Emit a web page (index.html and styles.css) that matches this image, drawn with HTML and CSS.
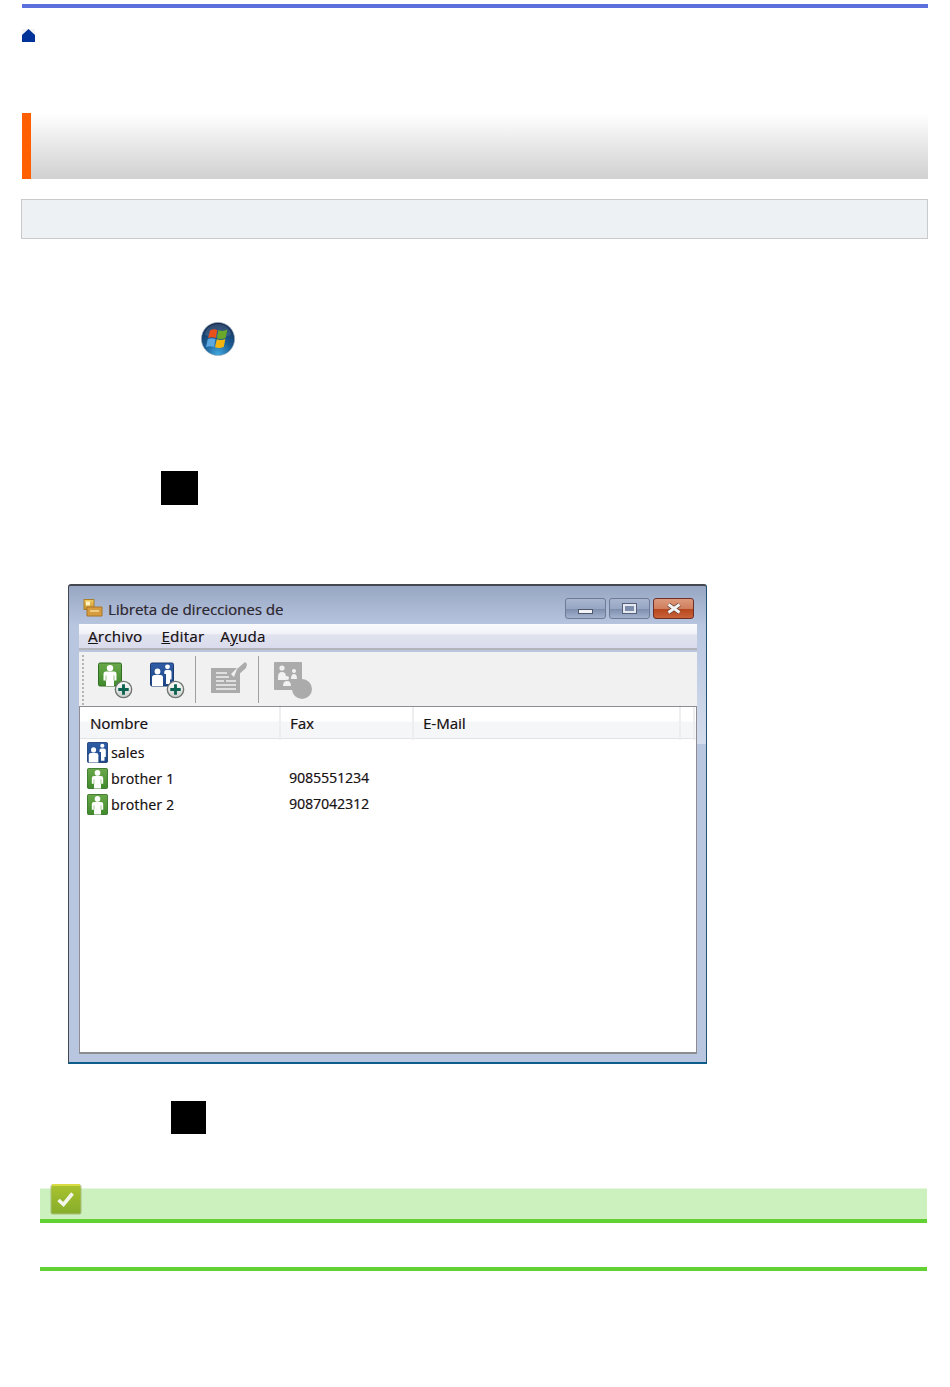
FILE: index.html
```html
<!DOCTYPE html>
<html>
  <head>
    <meta charset="utf-8" />
    <title>Libreta de direcciones</title>
    <link rel="stylesheet" href="styles.css">
  </head>

  <body>
    <!-- shared icons -->
    <svg class="sprite" xmlns="http://www.w3.org/2000/svg">
      <defs>
        <linearGradient id="g-green" x1="0" y1="0" x2="0" y2="1">
          <stop offset="0" stop-color="#6aa84a" />
          <stop offset="1" stop-color="#3f8a2c" />
        </linearGradient>
        <linearGradient id="g-blue" x1="0" y1="0" x2="0" y2="1">
          <stop offset="0" stop-color="#2f5da6" />
          <stop offset="1" stop-color="#1d4585" />
        </linearGradient>
        <linearGradient id="g-badge" x1="0" y1="0" x2="0" y2="1">
          <stop offset="0" stop-color="#ffffff" />
          <stop offset="1" stop-color="#c9cdc9" />
        </linearGradient>
        <radialGradient id="g-orb" cx="0.5" cy="0.95" r="0.95">
          <stop offset="0" stop-color="#3fa6dc" />
          <stop offset="0.45" stop-color="#1c5f97" />
          <stop offset="1" stop-color="#15294f" />
        </radialGradient>
        <linearGradient id="g-check" x1="0" y1="0" x2="0" y2="1">
          <stop offset="0" stop-color="#a8c22e" />
          <stop offset="1" stop-color="#86ad2b" />
        </linearGradient>
        <linearGradient id="g-book" x1="0" y1="0" x2="0" y2="1">
          <stop offset="0" stop-color="#f0cf62" />
          <stop offset="1" stop-color="#c98f2e" />
        </linearGradient>
      </defs>
      <symbol id="i-person" viewBox="0 0 24 24">
        <rect x="0.5" y="0.5" width="23" height="23" rx="1.5" fill="url(#g-green)" stroke="#2f6d20" />
        <circle cx="12" cy="5.6" r="3.2" fill="#fff" />
        <path d="M5.500 11.500q0-2.500 2.500-2.500h8q2.500 0 2.500 2.500v6.500h-2.500v5.500h-8V18H5.500z" fill="#fff" />
        <path d="M8 13v5M16 13v5" stroke="#7fb466" stroke-width="0.8" />
      </symbol>
      <symbol id="i-group" viewBox="0 0 24 24">
        <rect x="0.5" y="0.5" width="23" height="23" rx="1.500" fill="url(#g-blue)" stroke="#173a73" />
        <circle cx="7.500" cy="9" r="2.900" fill="#fff" />
        <path d="M2 15q0-2.500 2.500-2.500h6q2.500 0 2.500 2.500v8.500H2z" fill="#fff" />
        <circle cx="17.500" cy="4.300" r="2.400" fill="#fff" />
        <path d="M14.300 9.500q0-2 2-2h3q2.200 0 2.200 2v7.500h-1.500v4.500h-4v-10h-1.700z" fill="#fff" />
      </symbol>
      <symbol id="i-plus" viewBox="0 0 20 20">
        <circle cx="10" cy="10" r="8.600" fill="url(#g-badge)" stroke="#6d746f" stroke-width="1.400" />
        <path d="M8.500 4.500h3v4h4v3h-4v4h-3v-4h-4v-3h4z" fill="#0c6150" />
      </symbol>
    </svg>

    <div class="top-bar"></div>

    <svg class="home-icon" viewBox="0 0 13 13" xmlns="http://www.w3.org/2000/svg">
      <rect width="13" height="6" fill="#f4f4f4" />
      <path d="M6.500 0L13 6v7H0V6z" fill="#003399" />
    </svg>

    <div class="heading"></div>
    <div class="lead-box"></div>

    <svg class="orb-icon" viewBox="0 0 34 34" xmlns="http://www.w3.org/2000/svg">
      <circle cx="17" cy="17" r="16.600" fill="url(#g-orb)" stroke="#9aa7b5" stroke-width="0.600" />
      <path d="M4 13a13 11 0 0 1 26 0q-13 5-26 0z" fill="#fff" opacity="0.120" />
      <path d="M9 8.500q3.600-2 7.300-.5l-1.500 8q-3.800-1.500-7.700 0z" fill="#e8501c" />
      <path d="M17.500 8q4 2 8.800-.5l-1.700 8.500q-4.400 2-8.700.3z" fill="#6aa82a" />
      <path d="M6.800 17q4-1.500 7.700 0l-1.500 8q-3.800-1.500-8 .3z" fill="#5ba8e0" />
      <path d="M15.800 17.300q4.300 1.700 8.600-.3l-1.700 8q-4.400 2-8.700.3z" fill="#f5b50f" />
    </svg>

    <div class="redacted redacted-first"></div>

    <div class="app-window">
      <div class="title-row">
        <svg class="book-icon" viewBox="0 0 20 18" xmlns="http://www.w3.org/2000/svg">
          <rect x="1" y="0.500" width="10" height="10" fill="url(#g-book)" stroke="#a87f2c" />
          <rect x="3" y="2.500" width="4" height="4" fill="#fff3c4" />
          <path d="M4 8h15v9H4z" fill="#d59b3d" stroke="#a8742a" />
          <path d="M7 12h9" stroke="#f6dd9a" stroke-width="1.500" />
        </svg>
        <span class="title-text">Libreta de direcciones de</span>
        <div class="win-buttons">
          <div class="win-btn win-min"><span class="glyph-min"></span></div>
          <div class="win-btn win-max"><span class="glyph-max"></span></div>
          <div class="win-btn win-close">
            <svg class="glyph-close" viewBox="0 0 16 11" xmlns="http://www.w3.org/2000/svg">
              <path d="M2.500 1.500l11 8m0-8l-11 8" stroke="#5b3a30" stroke-width="4.400" />
              <path d="M2.500 1.500l11 8m0-8l-11 8" stroke="#f3f3f3" stroke-width="2.900" />
            </svg>
          </div>
        </div>
      </div>

      <div class="menu-bar">
        <span class="menu-item menu-file"><u>A</u>rchivo</span>
        <span class="menu-item menu-edit"><u>E</u>ditar</span>
        <span class="menu-item">A<u>y</u>uda</span>
      </div>

      <div class="tool-bar">
        <div class="grip"></div>
        <svg class="tool tool-add-person" viewBox="0 0 36 37" xmlns="http://www.w3.org/2000/svg">
          <use href="#i-person" width="24" height="25" />
          <use href="#i-plus" x="16" y="18" width="19" height="19" />
        </svg>
        <svg class="tool tool-add-group" viewBox="0 0 36 37" xmlns="http://www.w3.org/2000/svg">
          <use href="#i-group" width="24" height="25" />
          <use href="#i-plus" x="16" y="18" width="19" height="19" />
        </svg>
        <div class="tool-sep"></div>
        <svg class="tool tool-edit" viewBox="0 0 36 37" xmlns="http://www.w3.org/2000/svg">
          <path d="M0 6h26l-6 6 3 3 6-6v22H0z" fill="#ababab" />
          <path d="M26 7l8-7 2 2-1 4-9 8-3 1z" fill="#ababab" />
          <path d="M5 11h11M5 15h13M5 19h8M15 19h10M5 23h20M5 27h20" stroke="#f1f1f1" stroke-width="1.300" />
        </svg>
        <div class="tool-sep tool-sep-last"></div>
        <svg class="tool tool-group-off" viewBox="0 0 39 37" xmlns="http://www.w3.org/2000/svg">
          <rect width="28" height="28" rx="1" fill="#ababab" />
          <circle cx="8" cy="6" r="2.600" fill="#f1f1f1" />
          <path d="M4 15q0-5 4-5t4 5v3H4z" fill="#f1f1f1" />
          <circle cx="20" cy="9" r="2" fill="#f1f1f1" />
          <path d="M17 17q0-5 3-5t3 5z" fill="#f1f1f1" />
          <circle cx="13" cy="16" r="2" fill="#f1f1f1" />
          <path d="M9 24q0-5 4-5t4 5z" fill="#f1f1f1" />
          <circle cx="28" cy="27" r="10" fill="#ababab" />
        </svg>
      </div>

      <div class="list-view">
        <div class="list-head">
          <div class="col-head">Nombre</div>
          <div class="col-head">Fax</div>
          <div class="col-head">E-Mail</div>
          <div class="col-head"></div>
        </div>
        <div class="list-rows">
          <div class="list-row">
            <div class="cell-name"><svg class="row-icon"><use href="#i-group" width="21" height="21" /></svg>sales</div>
            <div class="cell-fax"></div>
          </div>
          <div class="list-row">
            <div class="cell-name"><svg class="row-icon"><use href="#i-person" width="21" height="21" /></svg>brother 1</div>
            <div class="cell-fax">9085551234</div>
          </div>
          <div class="list-row">
            <div class="cell-name"><svg class="row-icon"><use href="#i-person" width="21" height="21" /></svg>brother 2</div>
            <div class="cell-fax">9087042312</div>
          </div>
        </div>
      </div>
    </div>

    <div class="redacted redacted-second"></div>

    <div class="note">
      <div class="note-head">
        <svg class="note-icon" viewBox="0 0 32 31" xmlns="http://www.w3.org/2000/svg">
          <rect x="0.500" y="0.500" width="31" height="30" rx="2" fill="#8a9a4a" opacity="0.550" />
          <rect x="1.500" y="1.500" width="29" height="28" rx="1.500" fill="url(#g-check)" />
          <rect x="2" y="0" width="28" height="2" fill="#d9dc45" />
          <path d="M8.500 16l5 4.500 9-11" fill="none" stroke="#f4f6ec" stroke-width="3.600" />
        </svg>
      </div>
      <div class="note-body"></div>
    </div>
  </body>
</html>
```

FILE: styles.css
```css
html,
body {
  margin: 0;
  background: #ffffff;
}

body {
  font-family: "Open Sans", "Noto Sans", sans-serif;
}

.sprite {
  display: block;
  width: 0;
  height: 0;
}

.top-bar {
  height: 4px;
  margin: 4px 22px 0 22px;
  background-color: #5b70dc;
}

.home-icon {
  display: block;
  width: 13px;
  height: 13px;
  margin: 21px 0 0 22px;
}

.heading {
  height: 66px;
  margin: 71px 22px 0 22px;
  border-left: 9px solid #ff5f00;
  background: linear-gradient(#ffffff, #d0d0d0);
}

.lead-box {
  box-sizing: border-box;
  height: 40px;
  margin: 20px 22px 0 21px;
  border: 1px solid #c8cacc;
  background-color: #eef1f4;
}

.orb-icon {
  display: block;
  width: 34px;
  height: 34px;
  margin: 83px 0 0 201px;
}

.redacted {
  background-color: #000000;
}

.redacted-first {
  width: 37px;
  height: 34px;
  margin: 115px 0 0 161px;
}

.redacted-second {
  width: 35px;
  height: 33px;
  margin: 37px 0 0 171px;
}

/* address book window */
.app-window {
  box-sizing: border-box;
  width: 639px;
  height: 480px;
  margin: 79px 0 0 68px;
  padding: 0 9px 8px 10px;
  border-top: 2px solid #44484f;
  border-left: 1px solid #44484f;
  border-right: 1px solid #24506f;
  border-bottom: 2px solid #0c5d8c;
  border-radius: 3px 3px 0 0;
  background:
    linear-gradient(#b8c6e0, #d3dcec) right 40px / 9px 118px no-repeat,
    linear-gradient(#97a6c2, #b8c6e0) top / 100% 40px no-repeat,
    #b8c6e0;
  font-size: 14px;
  color: #141414;
  text-shadow: 0.4px 0 0 rgba(70, 10, 30, 0.5);
}

.title-row {
  display: flex;
  align-items: flex-start;
  box-sizing: border-box;
  height: 38px;
  padding: 12px 3px 0 4px;
}

.book-icon {
  width: 20px;
  height: 18px;
  margin: 1px 5px 0 0;
}

.title-text {
  flex: 1;
  font-size: 15px;
  line-height: 22px;
  color: #2b2b33;
}

.win-buttons {
  display: flex;
  gap: 3px;
}

.win-btn {
  display: flex;
  justify-content: center;
  align-items: center;
  box-sizing: border-box;
  width: 41px;
  height: 21px;
  border: 1px solid #6f7b96;
  border-radius: 3px;
  background: linear-gradient(#a9b6d0 0, #97a6c3 50%, #7f8fae 55%, #a3b2cd 100%);
}

.win-min {
  align-items: flex-end;
  padding-bottom: 4px;
}

.win-close {
  border-color: #6e2f28;
  background: linear-gradient(#dd9a7c 0, #cf7f5e 50%, #b8481f 55%, #c9623a 100%);
}

.glyph-min {
  width: 13px;
  height: 3px;
  border: 1px solid #4d566b;
  background-color: #f2f4f8;
}

.glyph-max {
  width: 9px;
  height: 5px;
  border: 2px solid #e4e8f0;
  box-shadow: 0 0 0 1px #566078;
  background-color: #7e8dab;
}

.glyph-close {
  width: 16px;
  height: 11px;
}

.menu-bar {
  display: flex;
  align-items: center;
  box-sizing: border-box;
  height: 26px;
  padding-left: 9px;
  border-bottom: 2px solid #b3b3ba;
  background: linear-gradient(#fbfbfe 0, #f1f2f8 40%, #e0e2ee 45%, #dadced 100%);
  font-size: 15px;
  letter-spacing: 0.3px;
}

.menu-file {
  margin-right: 19px;
}

.menu-edit {
  margin-right: 16px;
}

.tool-bar {
  display: flex;
  align-items: flex-start;
  box-sizing: border-box;
  height: 54px;
  margin-top: 2px;
  background-color: #f1f1f1;
}

.grip {
  width: 2px;
  height: 50px;
  margin: 3px 12px 0 3px;
  border-left: 2px dotted #b4b4b4;
}

.tool {
  flex: none;
  width: 36px;
  height: 37px;
  margin-top: 10px;
}

.tool-add-person {
  margin-right: 16px;
}

.tool-sep {
  flex: none;
  width: 1px;
  height: 47px;
  margin: 4px 15px 0 9px;
  background-color: #a0a0a0;
}

.tool-sep-last {
  margin-left: 11px;
}

.tool-group-off {
  width: 39px;
}

/* contact list */
.list-view {
  box-sizing: border-box;
  height: 348px;
  border: 1px solid #8c8c92;
  border-bottom-width: 2px;
  background-color: #ffffff;
}

.list-head {
  display: grid;
  grid-template-columns: 201px 133px 267px 14px;
  height: 32px;
  box-sizing: border-box;
  border-bottom: 1px solid #e2e3e6;
  background: linear-gradient(#ffffff 0, #ffffff 45%, #f5f6f8 50%, #f5f6f8 100%);
}

.col-head {
  padding-left: 10px;
  border-right: 2px solid #eeeef0;
  font-size: 15px;
  line-height: 33px;
}

.col-head + .col-head {
  padding-left: 9px;
}

.list-rows {
  padding-top: 1px;
}

.list-row {
  display: grid;
  grid-template-columns: 200px 133px;
  height: 26px;
  line-height: 25px;
}

.list-row:first-child {
  height: 25px;
}

.cell-name {
  display: flex;
  align-items: center;
  padding-left: 7px;
  letter-spacing: 0.2px;
}

.cell-fax {
  padding-left: 9px;
}

.row-icon {
  width: 21px;
  height: 21px;
  margin-right: 3px;
}

/* note box */
.note {
  margin: 54px 23px 0 40px;
  border-bottom: 4px solid #62d134;
}

.note-head {
  position: relative;
  height: 30px;
  border-top: 1px solid #e6f7de;
  border-bottom: 4px solid #62d134;
  background-color: #cdf0bf;
}

.note-icon {
  position: absolute;
  left: 10px;
  top: -5px;
  width: 32px;
  height: 31px;
}

.note-body {
  height: 44px;
}
```
